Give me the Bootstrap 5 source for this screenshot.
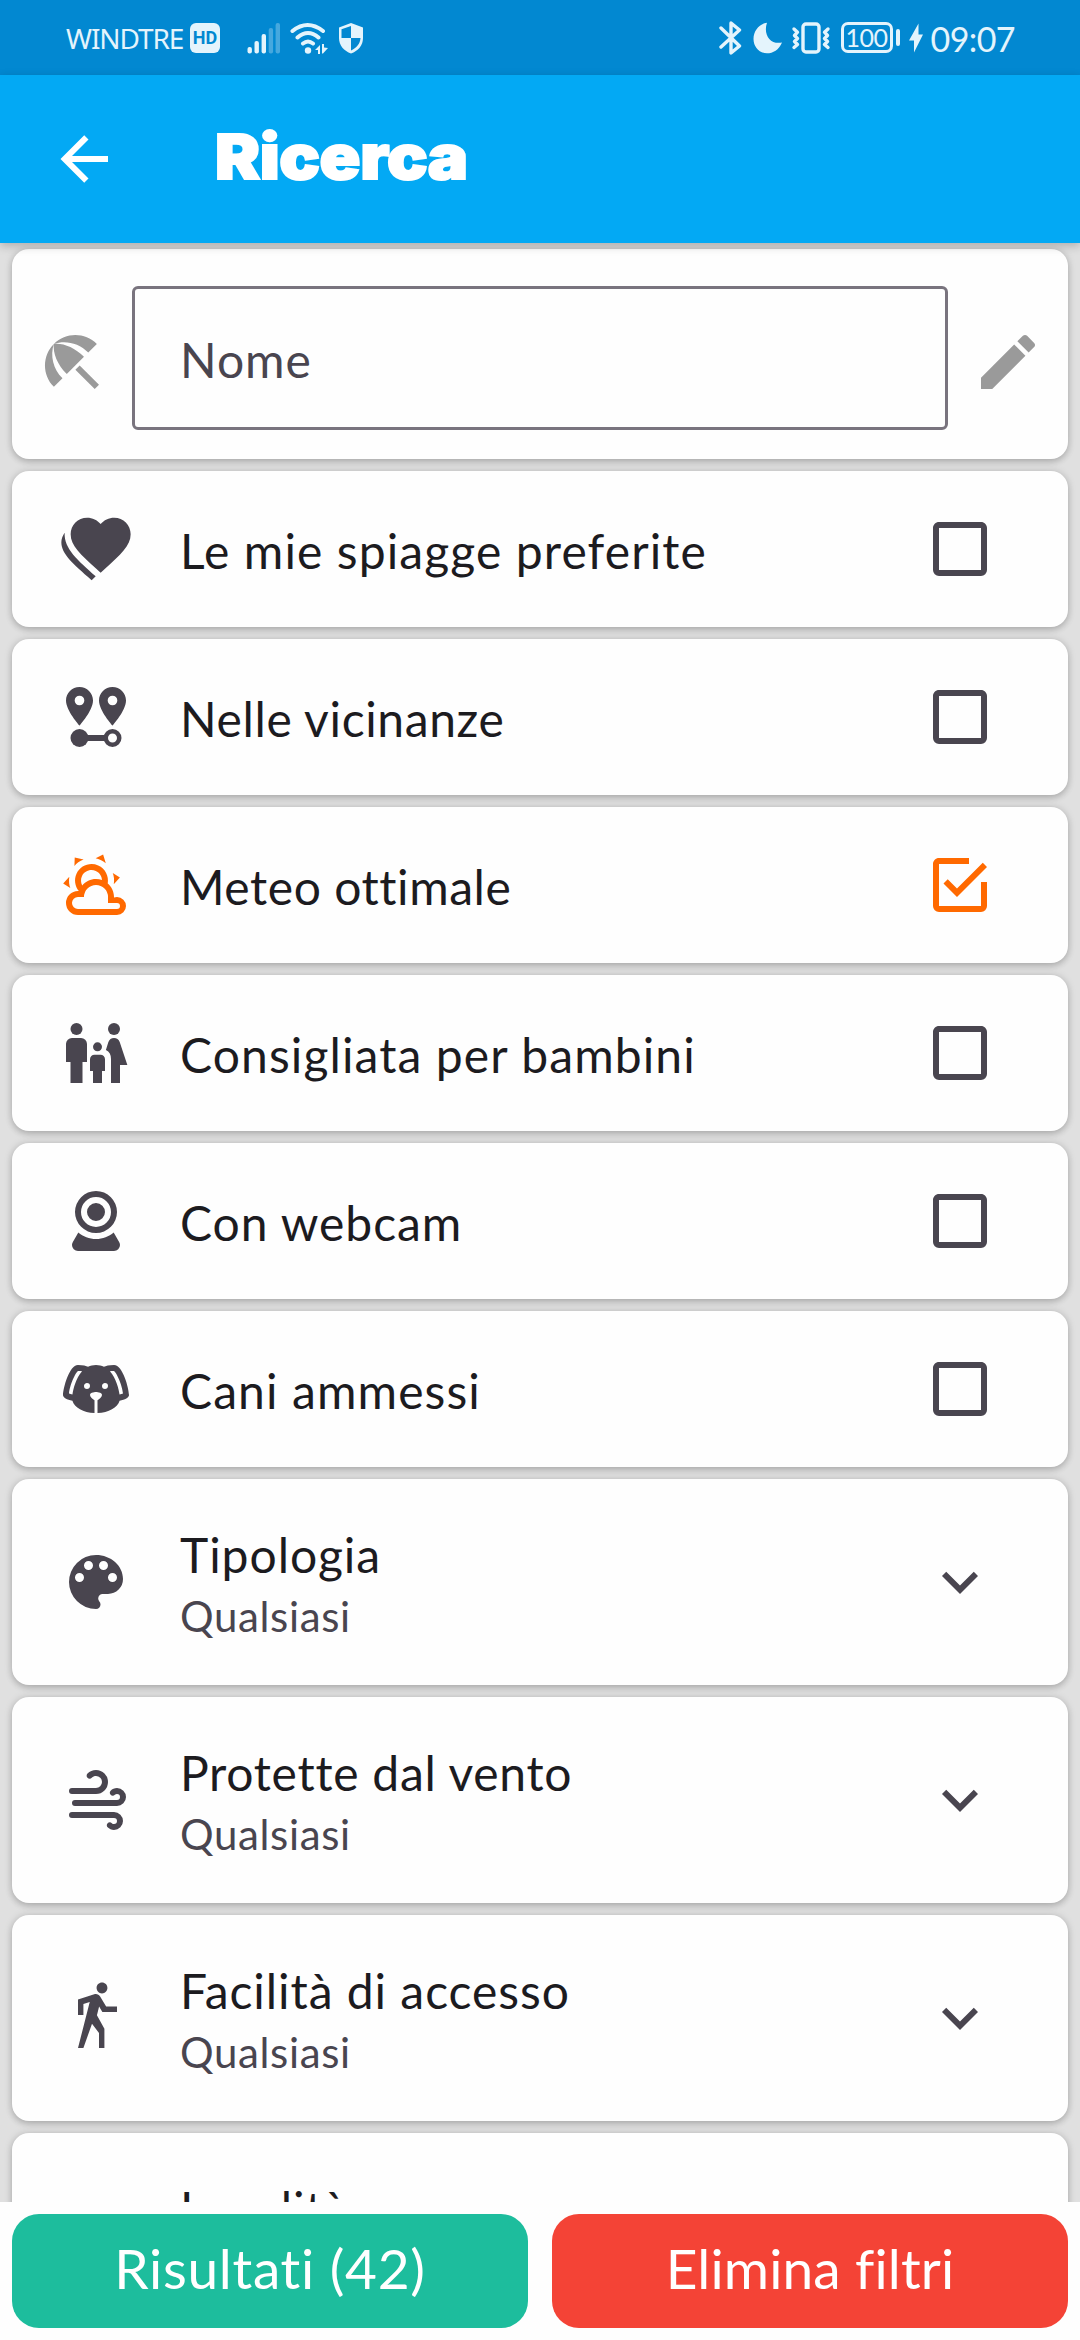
<!DOCTYPE html>
<html lang="it">
<head>
<meta charset="utf-8">
<meta name="viewport" content="width=device-width, initial-scale=1">
<title>Ricerca</title>
<link href="https://cdn.jsdelivr.net/npm/bootstrap@5.3.0/dist/css/bootstrap.min.css" rel="stylesheet">
<style>
  body { font-family: Lato, "Open Sans", sans-serif; color: #1c1b1f; background: #e0e0e0; font-size: 48px; }
  .screen { height: 2340px; width: 1080px; }
  svg { display: block; flex: none; fill: currentColor; }
  .status { flex: none; height: 75px; background: #0288d1; color: #e4f4fc; padding: 0 65px 0 66px; }
  .carrier { font: 400 28px/40px "Noto Sans", sans-serif; width: 124px; letter-spacing: -1.1px; margin-top: 1px; }
  .hd { width: 30px; height: 30px; border-radius: 6px; background: #e4f4fc; color: #0288d1; font: 700 18px/30px Roboto, sans-serif; margin-right: 27px; }
  .clock { font-size: 34px; line-height: 40px; letter-spacing: -.6px; margin-left: 7px; margin-top: 2px; }
  .battery { width: 52px; height: 31px; border: 3px solid; border-radius: 7px; font-size: 25px; line-height: 25px; letter-spacing: -.5px; margin-left: 10px; }
  .nub { width: 4px; height: 17px; border-radius: 2px; background: currentColor; margin: 0 8px 0 3px; }
  .moon { margin-left: 11px; }
  .appbar { flex: none; height: 168px; background: #03a9f4; color: #fff; padding-left: 48px; box-shadow: 0 3px 9px rgba(0,0,0,.22); z-index: 2; }
  .apptitle { font: 900 62px/80px Inter, sans-serif; letter-spacing: -.4px; -webkit-text-stroke: 2px #fff; margin: -5px 0 0 95px; transform: scaleX(1.09); transform-origin: left; }
  .ic { width: 72px; height: 72px; }
  .list-area { padding: 6px 12px 0; gap: 12px; min-height: 0; }
  .tile { flex: none; background: #fefefe; border-radius: 17px; box-shadow: 0 3px 6px rgba(0,0,0,.17), 0 0 9px rgba(0,0,0,.13); color: #49454f; padding: 0 72px 0 48px; gap: 48px; }
  .tile-search { height: 210px; padding: 37px 24px 29px; gap: 24px; color: #9a9a9a; }
  .tile-search .ic { margin-top: 8px; }
  .tile-search .field { height: 144px; border: 3px solid #79747e; border-radius: 6px; color: #49454f; padding: 3px 0 0 45px; letter-spacing: 1px; }
  .one { height: 156px; }
  .two { height: 206px; }
  .ttl { color: #1c1b1f; line-height: 67px; white-space: nowrap; }
  .one .ttl { padding-top: 3px; }
  .sub { font-size: 42px; line-height: 56px; letter-spacing: .65px; }
  .s5 { letter-spacing: .55px; } .s6 { letter-spacing: .62px; } .s7 { letter-spacing: .72px; } .s9 { letter-spacing: .95px; } .s11 { letter-spacing: 1.1px; }
  .on { color: #ff6900; }
  .actions { flex: none; height: 138px; background: #fefefe; padding: 12px 12px; gap: 24px; z-index: 1; }
  .act { height: 114px; border-radius: 27px; color: #fff; font-size: 55px; line-height: 1; padding: 0 0 6px; border: 0; }
  .act-go { background: #1dbd9d; letter-spacing: .7px; } .act-clear { background: #f44336; letter-spacing: .15px; }
</style>
</head>
<body class="m-0 overflow-hidden">
<svg width="0" height="0" class="position-absolute" aria-hidden="true">
  <symbol id="box" viewBox="0 0 24 24"><path d="M19,3H5C3.89,3 3,3.89 3,5V19A2,2 0 0,0 5,21H19A2,2 0 0,0 21,19V5C21,3.89 20.1,3 19,3M19,5V19H5V5H19Z"/></symbol>
  <symbol id="chev" viewBox="0 0 24 24"><path d="M7.41,8.58L12,13.17L16.59,8.58L18,10L12,16L6,10L7.41,8.58Z"/></symbol>
</svg>
<div class="screen d-flex flex-column overflow-hidden">
  <header class="status d-flex align-items-center">
    <span class="carrier">WINDTRE</span>
    <span class="hd text-center">HD</span>
    <svg width="34" height="32" viewBox="0 0 34 32"><rect x=".5" y="25" width="4.4" height="6.5" rx="2"/><rect x="7.5" y="19" width="4.4" height="12.5" rx="2"/><rect x="14.6" y="12" width="4.4" height="19.5" rx="2"/><g opacity=".3"><rect x="21.7" y="6" width="4.4" height="25.5" rx="2"/><rect x="28.6" y="1" width="4.4" height="30.5" rx="2"/></g></svg>
    <svg class="ms-2" width="40" height="34" viewBox="0 0 40 34"><g fill="none" stroke="currentColor" stroke-width="4" stroke-linecap="round"><path d="M3.500 10Q18.500 -2 34 10M8.500 16.500Q19 7.500 29.500 16.500M14 22.500Q19 18.500 24 22.500"/></g><circle cx="19" cy="29.500" r="3.200"/><path d="M26 29l5-5v9h-2v-4zM33 23l2 0v3.500l4 .5-5 5.500h-1z"/></svg>
    <svg class="ms-2" width="28" height="34" viewBox="0 0 28 34"><path d="M14 2L26 6.500V17C26 24.500 21 30 14 32.500C7 30 2 24.500 2 17V6.500Z"/><path fill="#0288d1" d="M14 5V17H4.500V8.300ZM14 17H23.500C23 23 19.500 27 14 29.500Z"/></svg>
    <svg class="ms-auto" width="23" height="36" viewBox="0 0 23 36"><path fill="none" stroke="currentColor" stroke-width="3.400" stroke-linejoin="round" stroke-linecap="round" d="M2 8L20.500 26L12 33V3L20.500 10L2 27"/></svg>
    <svg class="moon" width="30" height="32" viewBox="0 0 30 32"><path d="M14 .800C10 12 17 23 29 20.500C26 28 20 31.300 14 31.300C6.500 31.300 .500 25 .500 17C.500 8 7 1.500 14 .800Z"/></svg>
    <svg class="ms-2" width="40" height="32" viewBox="0 0 40 32"><g fill="none" stroke="currentColor" stroke-width="3.400" stroke-linejoin="round" stroke-linecap="round"><rect x="12" y="2" width="16" height="28" rx="3"/><path d="M3 7L6.500 10.200L3.500 13.500L6.500 16.500L3.500 19.500L6.500 22.500L3 25.500M37 7L33.500 10.200L36.500 13.500L33.500 16.500L36.500 19.500L33.500 22.500L37 25.500"/></g></svg>
    <span class="battery text-center">100</span><span class="nub"></span>
    <svg width="16" height="30" viewBox="0 0 16 30"><path d="M10.500 .500V11.500H15L6 29.500V17.500H1Z"/></svg>
    <span class="clock">09:07</span>
  </header>

  <nav class="appbar d-flex align-items-center position-relative">
    <svg class="ic" viewBox="0 0 24 24"><path d="M20,11V13H8L13.500,18.500L12.080,19.920L4.160,12L12.080,4.080L13.500,5.500L8,11H20Z"/></svg>
    <h1 class="apptitle">Ricerca</h1>
  </nav>

  <main class="list-area d-flex flex-column flex-grow-1 overflow-hidden">
    <section class="tile tile-search d-flex align-items-center">
      <svg class="ic" viewBox="0 0 24 24"><path d="M13.127 14.560l1.430-1.430 6.440 6.443L19.570 21zm4.293-5.730l2.860-2.860c-3.950-3.950-10.350-3.960-14.300-.020 3.930-1.300 8.310-.250 11.440 2.880zM5.950 5.980c-3.940 3.950-3.930 10.350.020 14.300l2.860-2.860C5.700 14.290 4.650 9.910 5.950 5.980zm.020-.020l-.010.010c-.380 3.010 1.170 6.880 4.300 10.020l5.730-5.730c-3.130-3.130-7.010-4.680-10.020-4.300z"/></svg>
      <div class="field flex-grow-1 d-flex align-items-center">Nome</div>
      <svg class="ic" viewBox="0 0 24 24"><path d="M20.710,7.040C21.100,6.650 21.100,6 20.710,5.630L18.370,3.290C18,2.900 17.350,2.900 16.960,3.290L15.120,5.120L18.870,8.870M3,17.250V21H6.750L17.810,9.930L14.060,6.180L3,17.250Z"/></svg>
    </section>

    <section class="tile one d-flex align-items-center">
      <svg class="ic" viewBox="0 0 24 24"><path transform="translate(1.550 -1.450)" d="M12,21.350L10.550,20.030C5.400,15.360 2,12.270 2,8.500C2,5.410 4.420,3 7.500,3C9.240,3 10.910,3.810 12,5.080C13.090,3.810 14.760,3 16.500,3C19.580,3 22,5.410 22,8.500C22,12.270 18.600,15.360 13.450,20.030L12,21.350Z"/><path d="M1.550,6.550C.9,7.500 .45,8.600 .45,9.750C.45,13.600 4.100,16.700 10.550,22.400L11.900,21.100C6,15.700 1.300,12 1.550,6.550Z"/></svg>
      <div class="ttl s11 flex-grow-1">Le mie spiagge preferite</div>
      <svg class="ic"><use href="#box"/></svg>
    </section>

    <section class="tile one d-flex align-items-center">
      <svg class="ic" viewBox="0 0 24 24"><path fill-rule="evenodd" d="M6.500,2C4,2 2,4 2,6.500C2,9.870 6.500,14.860 6.500,14.860C6.500,14.860 11,9.870 11,6.500C11,4 9,2 6.500,2M6.500,4.890A1.610,1.610 0 0,1 6.500,8.110A1.610,1.610 0 0,1 6.500,4.890M17.500,2C15,2 13,4 13,6.500C13,9.870 17.500,14.860 17.500,14.860C17.500,14.860 22,9.870 22,6.500C22,4 20,2 17.500,2M17.500,4.890A1.610,1.610 0 0,1 17.500,8.110A1.610,1.610 0 0,1 17.500,4.890"/><circle cx="6.500" cy="19" r="3"/><path d="M8 18H15V20H8Z"/><circle cx="17.500" cy="19" r="2.250" fill="none" stroke="currentColor" stroke-width="1.500"/></svg>
      <div class="ttl s6 flex-grow-1">Nelle vicinanze</div>
      <svg class="ic"><use href="#box"/></svg>
    </section>

    <section class="tile one d-flex align-items-center">
      <svg class="ic on" viewBox="0 0 24 24"><path d="M12.740,5.470C15.100,6.500 16.350,9.030 15.920,11.460C17.190,12.560 18,14.190 18,16V16.170C18.310,16.060 18.650,16 19,16A3,3 0 0,1 22,19A3,3 0 0,1 19,22H6A4,4 0 0,1 2,18A4,4 0 0,1 6,14H6.270C5,12.450 4.600,10.240 5.500,8.260C6.720,5.500 9.970,4.240 12.740,5.470M11.930,7.300C10.160,6.500 8.090,7.310 7.310,9.070C6.850,10.090 6.930,11.220 7.410,12.130C8.500,10.830 10.160,10 12,10C12.700,10 13.380,10.120 14,10.340C13.940,9.060 13.180,7.860 11.930,7.300M13.550,3.640C13,3.400 12.450,3.230 11.880,3.120L14.370,1.820L15.270,4.710C14.760,4.290 14.190,3.930 13.550,3.640M6.090,4.440C5.600,4.790 5.170,5.190 4.800,5.630L4.910,2.820L7.870,3.500C7.250,3.710 6.650,4.030 6.090,4.440M18,9.710C17.910,9.120 17.780,8.550 17.590,8L19.970,9.500L17.920,11.730C18.030,11.080 18.050,10.400 18,9.710M3.040,11.300C3.110,11.900 3.240,12.470 3.430,13L1.060,11.500L3.100,9.280C3,9.930 2.970,10.610 3.040,11.300M19,18H16V16A4,4 0 0,0 12,12A4,4 0 0,0 8,16H6A2,2 0 0,0 4,18A2,2 0 0,0 6,20H19A1,1 0 0,0 20,19A1,1 0 0,0 19,18Z"/></svg>
      <div class="ttl s5 flex-grow-1">Meteo ottimale</div>
      <svg class="ic on" viewBox="0 0 24 24"><path d="M19,19H5V5H15V3H5C3.890,3 3,3.890 3,5V19A2,2 0 0,0 5,21H19A2,2 0 0,0 21,19V11H19M7.910,10.080L6.500,11.500L11,16L21,6L19.590,4.580L11,13.170L7.910,10.080Z"/></svg>
    </section>

    <section class="tile one d-flex align-items-center">
      <svg class="ic" viewBox="0 0 24 24"><circle cx="5.500" cy="4" r="2"/><circle cx="18" cy="4" r="2"/><circle cx="12.500" cy="9.950" r="1.500"/><path d="M4,7H7A2,2 0 0,1 9,9V15H7.500V22H3.500V15H2V9A2,2 0 0,1 4,7M11.500,12.550H13.500A1.500,1.500 0 0,1 15,14.050V18H14V22H11V18H10V14.050A1.500,1.500 0 0,1 11.500,12.550M18,7C18.900,7 19.600,7.500 19.900,8.300L22.450,16H20V22H17V14C17,12.600 16.500,11.600 15.300,11L16.100,8.400C16.400,7.500 17.100,7 18,7Z"/></svg>
      <div class="ttl s11 flex-grow-1">Consigliata per bambini</div>
      <svg class="ic"><use href="#box"/></svg>
    </section>

    <section class="tile one d-flex align-items-center">
      <svg class="ic" viewBox="0 0 24 24"><path fill-rule="evenodd" d="M12,2A7,7 0 0,1 19,9A7,7 0 0,1 12,16A7,7 0 0,1 5,9A7,7 0 0,1 12,2M12,4A5,5 0 0,0 7,9A5,5 0 0,0 12,14A5,5 0 0,0 17,9A5,5 0 0,0 12,4M12,6A3,3 0 0,1 15,9A3,3 0 0,1 12,12A3,3 0 0,1 9,9A3,3 0 0,1 12,6M6,22A2,2 0 0,1 4,20C4,19.620 4.100,19.270 4.290,18.970L6.110,15.810C7.690,17.170 9.750,18 12,18C14.250,18 16.310,17.170 17.890,15.810L19.710,18.970C19.900,19.270 20,19.620 20,20A2,2 0 0,1 18,22H6Z"/></svg>
      <div class="ttl s9 flex-grow-1">Con webcam</div>
      <svg class="ic"><use href="#box"/></svg>
    </section>

    <section class="tile one d-flex align-items-center">
      <svg class="ic" viewBox="0 0 24 24"><path fill-rule="evenodd" d="M18,4C16.290,4 15.250,4.330 14.650,4.610C13.880,4.230 13,4 12,4C11,4 10.120,4.230 9.350,4.610C8.750,4.330 7.710,4 6,4C3,4 1,12 1,14C1,14.830 2.320,15.590 4.140,15.900C4.780,18.140 7.800,19.850 11.500,20V15.720C10.910,15.350 10,14.680 10,14C10,13 12,13 12,13C12,13 14,13 14,14C14,14.680 13.090,15.350 12.500,15.720V20C16.200,19.850 19.220,18.140 19.860,15.900C21.680,15.590 23,14.830 23,14C23,12 21,4 18,4M4.150,13.870C3.650,13.750 3.260,13.610 3,13.500C3.250,10.730 5.200,6.400 6.050,6C6.590,6 7,6.060 7.370,6.110C5.270,8.420 4.440,12.040 4.150,13.870M9,12A1,1 0 0,1 8,11C8,10.460 8.450,10 9,10A1,1 0 0,1 10,11C10,11.560 9.550,12 9,12M15,12A1,1 0 0,1 14,11C14,10.460 14.450,10 15,10A1,1 0 0,1 16,11C16,11.560 15.550,12 15,12M19.850,13.870C19.560,12.040 18.730,8.420 16.630,6.110C17,6.060 17.410,6 17.950,6C18.800,6.400 20.750,10.730 21,13.500C20.750,13.610 20.360,13.750 19.850,13.870Z"/></svg>
      <div class="ttl s11 flex-grow-1">Cani ammessi</div>
      <svg class="ic"><use href="#box"/></svg>
    </section>

    <section class="tile two d-flex align-items-center">
      <svg class="ic" viewBox="0 0 24 24"><path fill-rule="evenodd" d="M17.500,12A1.500,1.500 0 0,1 16,10.500A1.500,1.500 0 0,1 17.500,9A1.500,1.500 0 0,1 19,10.500A1.500,1.500 0 0,1 17.500,12M14.500,8A1.500,1.500 0 0,1 13,6.500A1.500,1.500 0 0,1 14.500,5A1.500,1.500 0 0,1 16,6.500A1.500,1.500 0 0,1 14.500,8M9.500,8A1.500,1.500 0 0,1 8,6.500A1.500,1.500 0 0,1 9.500,5A1.500,1.500 0 0,1 11,6.500A1.500,1.500 0 0,1 9.500,8M6.500,12A1.500,1.500 0 0,1 5,10.500A1.500,1.500 0 0,1 6.500,9A1.500,1.500 0 0,1 8,10.500A1.500,1.500 0 0,1 6.500,12M12,3A9,9 0 0,0 3,12A9,9 0 0,0 12,21A1.500,1.500 0 0,0 13.500,19.500C13.500,19.110 13.350,18.760 13.110,18.500C12.880,18.230 12.730,17.880 12.730,17.500A1.500,1.500 0 0,1 14.230,16H16A5,5 0 0,0 21,11C21,6.580 16.970,3 12,3Z"/></svg>
      <div class="flex-grow-1"><div class="ttl s9">Tipologia</div><div class="sub">Qualsiasi</div></div>
      <svg class="ic"><use href="#chev"/></svg>
    </section>

    <section class="tile two d-flex align-items-center">
      <svg class="ic" viewBox="0 0 24 24"><path d="M4,10A1,1 0 0,1 3,9A1,1 0 0,1 4,8H12A2,2 0 0,0 14,6A2,2 0 0,0 12,4C11.450,4 10.950,4.220 10.590,4.590C10.200,5 9.560,5 9.170,4.590C8.780,4.200 8.780,3.560 9.170,3.170C9.900,2.450 10.900,2 12,2A4,4 0 0,1 16,6A4,4 0 0,1 12,10H4M19,12A1,1 0 0,0 20,11A1,1 0 0,0 19,10C18.720,10 18.470,10.110 18.290,10.290C17.900,10.680 17.270,10.680 16.880,10.290C16.500,9.900 16.500,9.270 16.880,8.880C17.420,8.340 18.170,8 19,8A3,3 0 0,1 22,11A3,3 0 0,1 19,14H5A1,1 0 0,1 4,13A1,1 0 0,1 5,12H19M18,18H4A1,1 0 0,1 3,17A1,1 0 0,1 4,16H18A3,3 0 0,1 21,19A3,3 0 0,1 18,22C17.170,22 16.420,21.660 15.880,21.120C15.500,20.730 15.500,20.100 15.880,19.710C16.270,19.320 16.900,19.320 17.290,19.710C17.470,19.890 17.720,20 18,20A1,1 0 0,0 19,19A1,1 0 0,0 18,18Z"/></svg>
      <div class="flex-grow-1"><div class="ttl s7">Protette dal vento</div><div class="sub">Qualsiasi</div></div>
      <svg class="ic"><use href="#chev"/></svg>
    </section>

    <section class="tile two d-flex align-items-center">
      <svg class="ic" viewBox="0 0 24 24"><path d="M14.120,10H19V8.200H15.380L13.380,4.870C13.080,4.370 12.540,4.030 11.920,4.030C11.740,4.030 11.580,4.060 11.420,4.110L6,5.800V11H7.800V7.330L9.910,6.670L6,22H7.800L10.670,13.890L13,17V22H14.800V15.590L12.310,11.050L13.040,8.180M14,3.800C15,3.800 15.800,3 15.800,2C15.800,1 15,0.200 14,0.200C13,0.200 12.200,1 12.200,2C12.200,3 13,3.800 14,3.800Z"/></svg>
      <div class="flex-grow-1"><div class="ttl s9">Facilità di accesso</div><div class="sub">Qualsiasi</div></div>
      <svg class="ic"><use href="#chev"/></svg>
    </section>

    <section class="tile two d-flex align-items-center">
      <span class="ic"></span>
      <div class="flex-grow-1"><div class="ttl s9">Località</div><div class="sub">&nbsp;</div></div>
    </section>
  </main>

  <footer class="actions d-flex">
    <button class="btn act act-go flex-fill w-50">Risultati (42)</button>
    <button class="btn act act-clear flex-fill w-50">Elimina filtri</button>
  </footer>
</div>
<script src="https://cdn.jsdelivr.net/npm/bootstrap@5.3.0/dist/js/bootstrap.bundle.min.js"></script>
</body>
</html>
